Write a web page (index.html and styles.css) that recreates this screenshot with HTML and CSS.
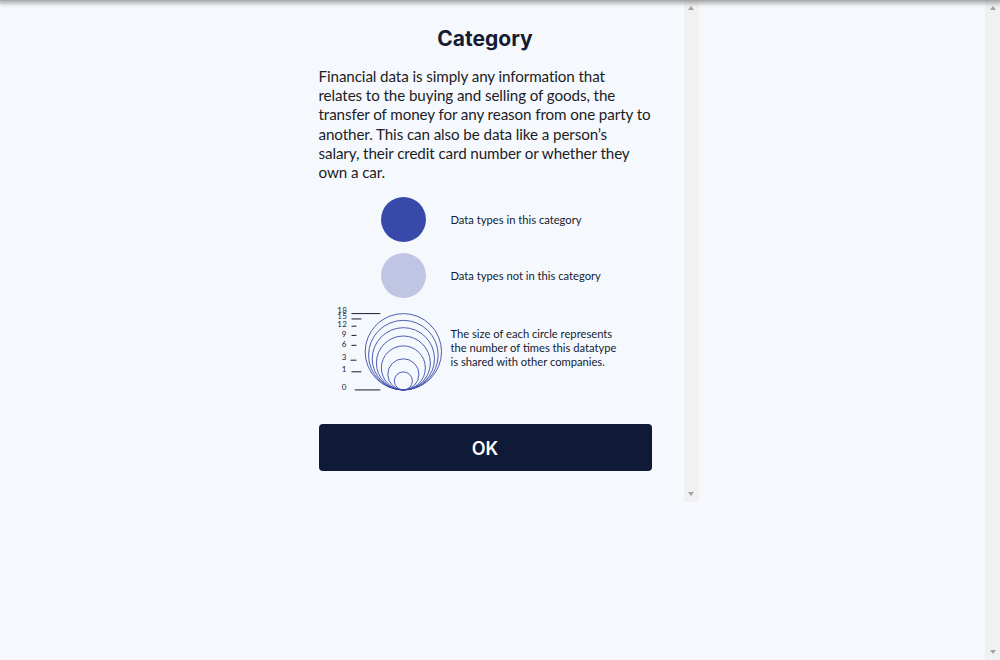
FILE: index.html
```html
<!DOCTYPE html>
<html lang="en">
<head>
<meta charset="utf-8">
<title>Category</title>
<link rel="stylesheet" href="styles.css">
</head>
<body>
<div class="top-shadow"></div>
<div class="page">
  <div class="page-main">
    <div class="dialog">
      <div class="dialog-body">
        <h2 class="title">Category</h2>
        <p class="desc">Financial data is simply any information that<br>relates to the buying and selling of goods, the<br>transfer of money for any reason from one party to<br>another. This can also be data like a person’s<br>salary, their credit card number or whether they<br>own a car.</p>
        <div class="legend">
          <div class="legend-row">
            <div class="legend-icon"><span class="dot dot-in"></span></div>
            <div class="legend-text">Data types in this category</div>
          </div>
          <div class="legend-row">
            <div class="legend-icon"><span class="dot dot-out"></span></div>
            <div class="legend-text">Data types not in this category</div>
          </div>
          <div class="legend-row legend-row-size">
            <div class="legend-icon">
              <svg class="size-scale" width="116" height="90" viewBox="0 0 116 90">
                <g fill="none" stroke="#3a49a8" stroke-width="0.9">
                  <circle cx="74" cy="48.8" r="38.5"/>
                  <circle cx="74" cy="52.2" r="35.1"/>
                  <circle cx="74" cy="55.9" r="31.4"/>
                  <circle cx="74" cy="60.1" r="27.2"/>
                  <circle cx="74" cy="65.1" r="22.2"/>
                  <circle cx="74" cy="71.6" r="15.7"/>
                  <circle cx="74" cy="78.2" r="9.1"/>
                </g>
                <g stroke="#141b33" stroke-width="1">
                  <line x1="21.7" y1="10.3" x2="50.7" y2="10.3"/>
                  <line x1="21.7" y1="15.7" x2="31.7" y2="15.7"/>
                  <line x1="21.7" y1="23" x2="26.7" y2="23"/>
                  <line x1="21.7" y1="32.3" x2="26.7" y2="32.3"/>
                  <line x1="21.7" y1="42.3" x2="26.7" y2="42.3"/>
                  <line x1="20.7" y1="57.3" x2="26.7" y2="57.3"/>
                  <line x1="21.7" y1="69" x2="31.7" y2="69"/>
                  <line x1="25" y1="87.3" x2="50.7" y2="87.3"/>
                </g>
                <g class="scale-labels" text-anchor="end">
                  <text x="17.5" y="9.4">18</text>
                  <text x="17.5" y="16.2">15</text>
                  <text x="17.5" y="23.8">12</text>
                  <text x="16.8" y="33.6">9</text>
                  <text x="16.8" y="43.6">6</text>
                  <text x="16.8" y="57">3</text>
                  <text x="16.8" y="69.6">1</text>
                  <text x="16.8" y="87.3">0</text>
                </g>
              </svg>
            </div>
            <div class="legend-text legend-text-wrap">The size of each circle represents the number of times this datatype is shared with other companies.</div>
          </div>
        </div>
        <button class="ok-btn" type="button">OK</button>
      </div>
      <div class="scrollbar">
        <span class="sb-btn"><span class="arrow-up"></span></span>
        <span class="sb-btn sb-btn-down"><span class="arrow-down"></span></span>
      </div>
    </div>
  </div>
  <div class="scrollbar">
    <span class="sb-btn"><span class="arrow-up"></span></span>
    <span class="sb-btn sb-btn-down"><span class="arrow-down"></span></span>
  </div>
</div>
</body>
</html>
```

FILE: styles.css
```css
html, body {
  margin: 0;
  padding: 0;
  height: 100%;
  overflow: hidden;
}

body {
  background: #f5f9fd;
  font-family: "Lato", "Liberation Sans", sans-serif;
}

.top-shadow {
  position: fixed;
  top: 0;
  left: 0;
  right: 0;
  height: 1px;
  background: #a9a9a9;
  box-shadow: 0 0 5px 2px rgba(0, 0, 0, 0.38);
  z-index: 10;
}

.page {
  height: 100vh;
  display: flex;
  background: #f5f9fd;
}

.page-main {
  flex: 1;
  display: flex;
  justify-content: center;
  align-items: flex-start;
}

.scrollbar {
  width: 15px;
  flex: none;
  background: #f1f1f1;
  display: flex;
  flex-direction: column;
  justify-content: space-between;
}

.sb-btn {
  height: 15px;
  display: flex;
  justify-content: center;
  align-items: flex-start;
  padding-top: 6px;
  box-sizing: border-box;
}

.sb-btn-down {
  align-items: flex-end;
  padding-top: 0;
  padding-bottom: 6px;
}

.arrow-up {
  width: 0;
  height: 0;
  border-left: 3.5px solid transparent;
  border-right: 3.5px solid transparent;
  border-bottom: 4px solid #a3a3a3;
}

.arrow-down {
  width: 0;
  height: 0;
  border-left: 3.5px solid transparent;
  border-right: 3.5px solid transparent;
  border-top: 4px solid #a3a3a3;
}

.dialog {
  width: 412px;
  height: 502px;
  display: flex;
}

.dialog-body {
  flex: 1;
  min-width: 0;
  padding: 26px 32px 0;
  display: flex;
  flex-direction: column;
}

.title {
  margin: 0;
  text-align: center;
  font-family: "Inter", "Lato", sans-serif;
  font-weight: 700;
  font-size: 21px;
  line-height: 26px;
  color: #141b33;
}

.desc {
  margin: 15px 0 0;
  font-size: 15.2px;
  letter-spacing: -0.1px;
  line-height: 19.2px;
  white-space: nowrap;
  color: #1c1c26;
}

.legend {
  margin-top: 15px;
  display: flex;
  flex-direction: column;
  gap: 11px;
}

.legend-row {
  display: flex;
  align-items: center;
  gap: 6px;
}

.legend-icon {
  width: 126px;
  flex: none;
  display: flex;
}

.dot {
  display: block;
  width: 45px;
  height: 45px;
  border-radius: 50%;
  margin-left: 62px;
}

.dot-in { background: #384aa9; }
.dot-out { background: #bfc5e3; }

.legend-row-size {
  margin-top: -6px;
}

.size-scale {
  display: block;
  margin-left: 11px;
}

.scale-labels {
  font-family: "Lato", sans-serif;
  font-size: 8px;
  letter-spacing: 0.4px;
  fill: #141b33;
}

.legend-text {
  font-size: 11.2px;
  line-height: 14px;
  color: #141b33;
}

.legend-text-wrap {
  width: 172px;
}

.ok-btn {
  margin-top: 31px;
  height: 47px;
  padding-top: 2px;
  width: 100%;
  border: none;
  border-radius: 4px;
  background: #0f1a38;
  color: #ffffff;
  font-family: "Inter", "Lato", sans-serif;
  font-weight: 600;
  font-size: 18px;
  flex: none;
  cursor: pointer;
}
```
